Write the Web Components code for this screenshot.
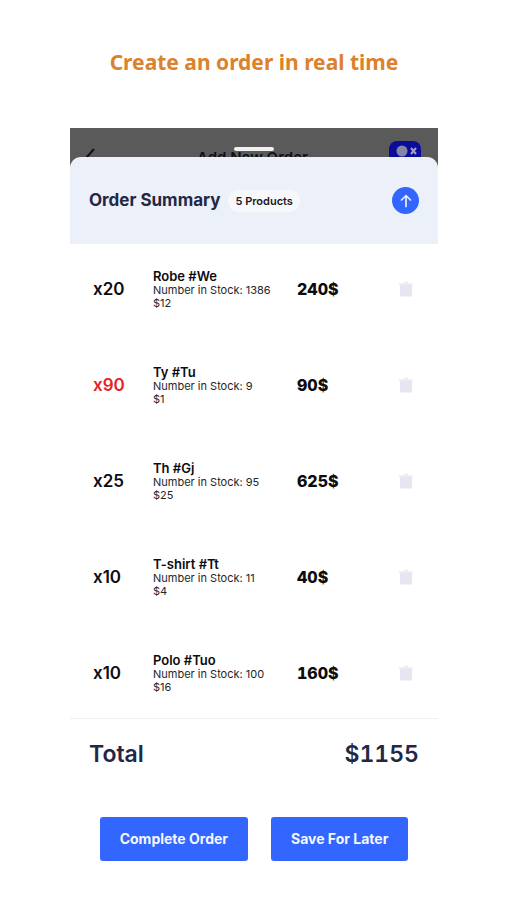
<!DOCTYPE html>
<html lang="en">
<head>
<meta charset="utf-8">
<meta name="viewport" content="width=device-width, initial-scale=1">
<title>Order Summary</title>
<style>
  body { margin: 0; background: #fff; color: #0c0c10; font-family: Inter, "Liberation Sans", sans-serif; }
</style>
</head>
<body>
<promo-page>
  <span slot="headline">Create an order in real time</span>
  <nav-backdrop>Add New Order</nav-backdrop>
  <order-sheet count="5 Products" total="$1155">
    <order-line role="listitem" qty="x20" name="Robe #We" stock="1386" price="$12" sum="240$"></order-line>
    <order-line role="listitem" qty="x90" name="Ty #Tu" stock="9" price="$1" sum="90$" short></order-line>
    <order-line role="listitem" qty="x25" name="Th #Gj" stock="95" price="$25" sum="625$"></order-line>
    <order-line role="listitem" qty="x10" name="T-shirt #Tt" stock="11" price="$4" sum="40$"></order-line>
    <order-line role="listitem" qty="x10" name="Polo #Tuo" stock="100" price="$16" sum="160$"></order-line>
    <action-button slot="actions">Complete Order</action-button>
    <action-button slot="actions">Save For Later</action-button>
  </order-sheet>
</promo-page>
<script>
class BaseElement extends HTMLElement {
  connectedCallback() {
    if (!this.shadowRoot) this.attachShadow({ mode: "open" }).innerHTML = this.render();
  }
  attr(name) { return this.getAttribute(name) || ""; }
}

customElements.define("promo-page", class extends BaseElement {
  render() {
    return `<style>
      :host { display: block; padding: 0 69px 32px 70px; }
      h1 { margin: 0; padding: 46px 0 50px; font: 700 21px/32px "Noto Sans", sans-serif; color: #dc822c; text-align: center; white-space: nowrap; }
    </style>
    <h1><slot name="headline"></slot></h1>
    <main><slot></slot></main>`;
  }
});

customElements.define("nav-backdrop", class extends BaseElement {
  render() {
    return `<style>
      :host { display: block; position: relative; height: 41px; background: #5a5a5a; overflow: hidden; }
      .bar { display: grid; grid-template-columns: 32px 1fr 32px; align-items: start; padding: 13px 17px 0 14px; }
      .title { padding-top: 7px; font-size: 15px; line-height: 20px; font-weight: 600; text-align: center; color: #101018; }
      svg { display: block; }
      .back { padding-top: 7px; }
      .grip { position: absolute; top: 19px; left: 50%; width: 40px; height: 4px; margin-left: -20px; border-radius: 2px; background: #f0f0f0; }
    </style>
    <div class="bar">
      <svg class="back" width="12" height="20" viewBox="0 0 12 20" fill="none" stroke="#101014" stroke-width="2"><path d="M10 1 2 10l8 9"/></svg>
      <span class="title"><slot></slot></span>
      <svg width="32" height="28" viewBox="0 0 32 28"><rect width="32" height="28" rx="8" fill="#0c0c9c"/><circle cx="13" cy="10" r="5.5" fill="#8585a8"/><path d="m22 7 5 6m0-6-5 6" stroke="#a0a0c8" stroke-width="2"/></svg>
    </div>
    <div class="grip"></div>`;
  }
});

customElements.define("order-sheet", class extends BaseElement {
  render() {
    return `<style>
      :host { display: block; position: relative; margin-top: -12px; color: #0c0c10; }
      header { display: flex; align-items: center; gap: 8px; padding: 30px 19px; border-radius: 11px 11px 0 0; background: #ecf0f8; }
      h2 { margin: 0; font-size: 17px; line-height: 27px; font-weight: 700; color: #222746; white-space: nowrap; }
      .count { padding: 3px 7px; border-radius: 11px; background: #f6f8fb; font-size: 11px; line-height: 16px; font-weight: 600; color: #1b1b22; white-space: nowrap; }
      button { display: grid; place-items: center; width: 27px; height: 27px; margin-left: auto; padding: 0; border: 0; border-radius: 50%; background: #3366ff; }
      .lines { display: grid; gap: 54px; padding: 24px 24px 24px 23px; }
      .total { display: flex; justify-content: space-between; margin: 0; padding: 19px 19px 0; border-top: 1px solid #f0f0f3; font-size: 23px; line-height: 32px; font-weight: 600; color: #222746; }
      .total dd { margin: 0; font-variant-numeric: tabular-nums; }
      .actions { display: flex; justify-content: center; gap: 23px; padding-top: 47px; }
    </style>
    <header>
      <h2>Order Summary</h2><span class="count">${this.attr("count")}</span>
      <button type="button" aria-label="Scroll up"><svg width="14" height="14" viewBox="0 0 14 14" fill="none" stroke="#e8f0ff" stroke-width="1.7" stroke-linecap="round" stroke-linejoin="round"><path d="M7 12.5V2M2.5 6 7 1.7 11.500 6"/></svg></button>
    </header>
    <div class="lines" role="list"><slot></slot></div>
    <dl class="total"><dt>Total</dt><dd>${this.attr("total")}</dd></dl>
    <div class="actions"><slot name="actions"></slot></div>`;
  }
});

customElements.define("order-line", class extends BaseElement {
  render() {
    return `<style>
      :host { display: grid; grid-template-columns: 60px 144px 1fr auto; align-items: center; }
      .qty { font-size: 17px; line-height: 24px; font-weight: 600; }
      :host([short]) .qty { color: #e8231f; }
      .name { font-size: 13px; line-height: 16px; font-weight: 600; }
      .meta { font-size: 11px; line-height: 13px; color: #25252b; white-space: nowrap; }
      .sum { font-size: 16px; line-height: 24px; font-weight: 800; font-variant-numeric: tabular-nums; }
      button { display: block; padding: 0; border: 0; background: none; }
      svg { display: block; }
    </style>
    <span class="qty">${this.attr("qty")}</span>
    <div>
      <div class="name">${this.attr("name")}</div>
      <div class="meta">Number in Stock: ${this.attr("stock")}</div>
      <div class="meta">${this.attr("price")}</div>
    </div>
    <span class="sum">${this.attr("sum")}</span>
    <button type="button" aria-label="Remove ${this.attr("name")}"><svg width="16" height="16" viewBox="0 0 16 16" fill="#e6e6f2"><path d="M4.500 2.500 6.500.5h3l2 2z" opacity=".7"/><path d="M1 2.500h14v2H1z" opacity=".8"/><path d="M2 4h12v11.500H2z"/></svg></button>`;
  }
});

customElements.define("action-button", class extends BaseElement {
  render() {
    return `<style>
      :host { display: block; }
      button { display: block; padding: 12px 20px; border: 0; border-radius: 3px; background: #3366ff; color: #f4f7ff; font: 700 14px/20px Inter, "Liberation Sans", sans-serif; white-space: nowrap; }
    </style>
    <button type="button"><slot></slot></button>`;
  }
});
</script>
</body>
</html>
